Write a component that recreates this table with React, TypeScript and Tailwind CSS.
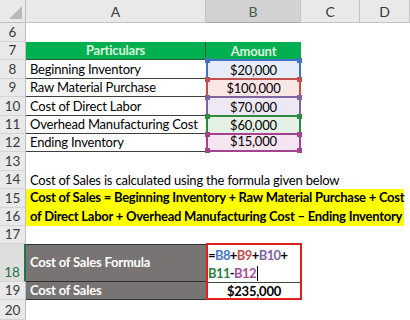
import React from "react";

const RowHead = ({ n, sel }: { n: number; sel?: boolean }) => (
  <div
    className={
      "flex items-end justify-center border-b border-[#d4d4d4] pb-[1px] leading-[16px] text-[13.5px] tracking-[0px] " +
      (sel
        ? "bg-[#dedede] text-[#217346] border-r-2 border-r-[#217346]"
        : "bg-[#e9e9e9] text-[#3a3a3a] border-r border-r-[#bfbfbf]")
    }
  >
    {n}
  </div>
);

const ColHead = ({ l, sel }: { l: string; sel?: boolean }) => (
  <div
    className={
      "flex items-center justify-center border-r border-b border-[#c4c4c4] text-[14px] " +
      (sel ? "bg-[#d2d2d2] text-[#44604d] border-b-[#a9a9a9]" : "bg-[#e9e9e9] text-[#3a3a3a]")
    }
  >
    {l}
  </div>
);

const Empty = ({ span }: { span: string }) => <div className={span} />;

type BC = { v: string; bg: string; bd: string; hd: string; last?: boolean };

const Handle = ({ pos, color }: { pos: string; color: string }) => (
  <div className={"absolute z-10 h-[5px] w-[5px] " + pos + " " + color} />
);

const items: { label: string; b: BC }[] = [
  { label: "Beginning Inventory", b: { v: "$20,000", bg: "bg-[#e6edf8]", bd: "border-[#4472c4]", hd: "bg-[#4472c4]" } },
  { label: "Raw Material Purchase", b: { v: "$100,000", bg: "bg-[#fbe5e5]", bd: "border-[#c0504d]", hd: "bg-[#c0504d]" } },
  { label: "Cost of Direct Labor", b: { v: "$70,000", bg: "bg-[#ece8f4]", bd: "border-[#8064a2]", hd: "bg-[#8064a2]" } },
  { label: "Overhead Manufacturing Cost", b: { v: "$60,000", bg: "bg-[#e5f1e5]", bd: "border-[#2f8a3f]", hd: "bg-[#2f8a3f]" } },
  { label: "Ending Inventory", b: { v: "$15,000", bg: "bg-[#f5e5f0]", bd: "border-[#a3438f]", hd: "bg-[#a3438f]", last: true } },
];

export default function App() {
  return (
    <div className="h-[320px] w-[410px] overflow-hidden bg-white font-['Lato','Liberation_Sans',sans-serif] text-[13px] tracking-[-0.2px] text-black">
      <div className="grid grid-cols-[26px_180px_95px_59px_50px] grid-rows-[23px_19px_18px_19px_18px_19px_18px_18px_19px_18px_19px_18px_18px_38px_18px_20px]">
        {/* header */}
        <div className="relative border-r border-b border-[#bfbfbf] bg-[#e9e9e9]">
          <svg className="absolute bottom-[3px] right-[3px]" width="13" height="13" viewBox="0 0 13 13">
            <polygon points="13,0 13,13 0,13" fill="#b9b9b9" />
          </svg>
        </div>
        <ColHead l="A" />
        <ColHead l="B" sel />
        <ColHead l="C" />
        <ColHead l="D" />

        {/* row 6 */}
        <RowHead n={6} />
        <Empty span="col-span-4" />

        {/* row 7 */}
        <RowHead n={7} />
        <div className="flex items-end justify-center border-r border-b border-[#2a5e35] bg-[#00b050] pb-[1px] font-bold leading-[16px] text-[#dcf5dc]">
          Particulars
        </div>
        <div className="flex items-end justify-center bg-[#00b050] pb-[1px] font-bold leading-[16px] text-[#dcf5dc]">
          Amount
        </div>
        <Empty span="col-span-2" />

        {/* rows 8-12 */}
        {items.map((it, i) => (
          <React.Fragment key={i}>
            <RowHead n={8 + i} />
            <div className="flex items-end whitespace-nowrap border-b border-[#404040] pb-[1px] pl-[4px] leading-[16px]">
              {it.label}
            </div>
            <div
              className={
                "relative -mt-[1px] flex items-end justify-center border-x-2 border-t-2 pb-[1px] leading-[16px] " +
                it.b.bg +
                " " +
                it.b.bd +
                (it.b.last ? " border-b-2" : "")
              }
            >
              {it.b.v}
              <Handle pos="-left-[3px] -top-[3px]" color={it.b.hd} />
              <Handle pos="-right-[3px] -top-[3px]" color={it.b.hd} />
              {it.b.last && <Handle pos="-left-[3px] -bottom-[3px]" color={it.b.hd} />}
              {it.b.last && <Handle pos="-right-[3px] -bottom-[3px]" color={it.b.hd} />}
            </div>
            <Empty span="col-span-2" />
          </React.Fragment>
        ))}

        {/* row 13 */}
        <RowHead n={13} />
        <Empty span="col-span-4" />

        {/* row 14 */}
        <RowHead n={14} />
        <div className="col-span-4 flex items-end whitespace-nowrap pb-[1px] pl-[4px] leading-[16px]">
          Cost of Sales is calculated using the formula given below
        </div>

        {/* rows 15-16 */}
        <RowHead n={15} />
        <div className="col-span-4 row-span-2 mr-[6px] flex flex-col justify-end whitespace-nowrap bg-[#ffff00] pb-[1px] pl-[4px] font-bold leading-[18.5px] tracking-[-0.25px]">
          <span>Cost of Sales = Beginning Inventory + Raw Material Purchase + Cost</span>
          <span>of Direct Labor + Overhead Manufacturing Cost – Ending Inventory</span>
        </div>
        <RowHead n={16} />

        {/* row 17 */}
        <RowHead n={17} />
        <Empty span="col-span-4" />

        {/* row 18 */}
        <RowHead n={18} sel />
        <div className="flex items-center border-y border-[#303030] bg-[#787474] pl-[4px] font-bold text-white">
          Cost of Sales Formula
        </div>
        <div className="row-span-2 -mt-[1px] -mr-[1px] flex flex-col border-2 border-[#e0201e] bg-white">
          <div className="h-[38px] border-b border-[#3a4a3a] pt-[1px] font-bold leading-[18px] tracking-[-0.6px]">
            <div>
              <span>=</span>
              <span className="text-[#4a78c6]">B8</span>
              <span>+</span>
              <span className="text-[#c0504d]">B9</span>
              <span>+</span>
              <span className="text-[#8064a2]">B10</span>
              <span>+</span>
            </div>
            <div className="flex items-center">
              <span className="text-[#2f7f3f]">B11</span>
              <span>-</span>
              <span className="text-[#a3519a]">B12</span>
              <span className="ml-[1px] inline-block h-[15px] w-[1px] bg-black" />
            </div>
          </div>
          <div className="flex flex-1 items-end justify-center font-bold leading-[16px]">$235,000</div>
        </div>
        <Empty span="col-span-2" />

        {/* row 19 */}
        <RowHead n={19} />
        <div className="flex items-end border-b border-[#303030] bg-[#787474] pb-[1px] pl-[4px] font-bold leading-[16px] text-white">
          Cost of Sales
        </div>
        <Empty span="col-span-2" />

        {/* row 20 */}
        <RowHead n={20} />
        <Empty span="col-span-4" />
      </div>
    </div>
  );
}
